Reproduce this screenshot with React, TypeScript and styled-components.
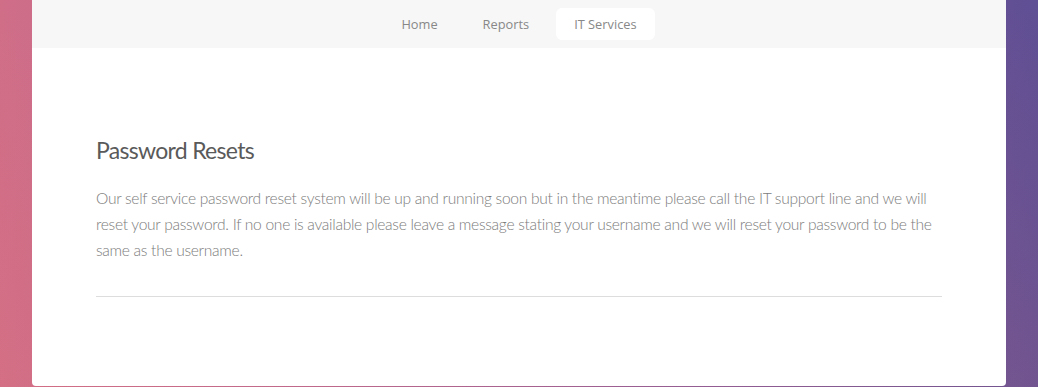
import React from 'react';
import styled, { createGlobalStyle } from 'styled-components';

const GlobalStyle = createGlobalStyle`
  html, body {
    margin: 0;
    padding: 0;
    height: 100%;
  }
  body {
    background:
      linear-gradient(180deg, rgba(255, 255, 255, 0) 0%, rgba(240, 120, 110, 0.12) 100%),
      linear-gradient(90deg, #d06e88 0%, #b9668f 30%, #8a5a98 65%, #5f4f94 100%);
    overflow: hidden;
  }
  #root {
    height: 100%;
  }
`;

const Page = styled.div`
  height: 387px;
  padding: 0 32px;
  box-sizing: border-box;
`;

const Card = styled.div`
  background: #ffffff;
  height: 386px;
  border-radius: 0 0 4px 4px;
  display: flex;
  flex-direction: column;
  overflow: hidden;
`;

const NavBar = styled.nav`
  height: 48px;
  background: #f7f7f7;
  display: flex;
  align-items: center;
  justify-content: center;
  gap: 9px;
`;

const NavItem = styled.a<{ $active?: boolean }>`
  height: 32px;
  padding: 0 18px;
  display: flex;
  align-items: center;
  border-radius: 6px;
  background: ${p => (p.$active ? '#ffffff' : 'transparent')};
  color: #888888;
  font-family: 'Open Sans', sans-serif;
  font-size: 12.8px;
  text-decoration: none;
`;

const Content = styled.section`
  padding: 84px 64px 0;
  font-family: 'Lato', 'Open Sans', sans-serif;
`;

const Heading = styled.h2`
  margin: 0 0 17px;
  font-size: 23px;
  font-weight: 400;
  line-height: 36px;
  color: #5a5a5a;
  letter-spacing: -0.7px;
`;

const Paragraph = styled.p`
  margin: 0;
  font-size: 15.6px;
  font-weight: 300;
  line-height: 26px;
  letter-spacing: -0.3px;
  color: #7c7c7c;
`;

const Divider = styled.hr`
  margin: 33px 0 0;
  border: 0;
  border-top: 1px solid #dddddd;
`;

const App: React.FC = () => {
  return (
    <>
      <GlobalStyle />
      <Page>
        <Card>
          <NavBar>
            <NavItem>Home</NavItem>
            <NavItem>Reports</NavItem>
            <NavItem $active>IT Services</NavItem>
          </NavBar>
          <Content>
            <Heading>Password Resets</Heading>
            <Paragraph>
              Our self service password reset system will be up and running soon but in the meantime please call the IT
              support line and we will reset your password. If no one is available please leave a message stating your
              username and we will reset your password to be the same as the username.
            </Paragraph>
            <Divider />
          </Content>
        </Card>
      </Page>
    </>
  );
};

export default App;
